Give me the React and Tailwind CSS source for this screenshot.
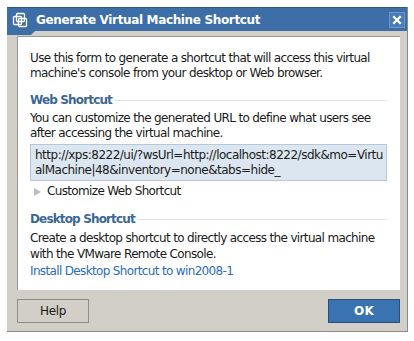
import React from 'react';

const FONT = { fontFamily: '"DejaVu Sans", "Liberation Sans", sans-serif' };

function VmIcon() {
  return (
    <svg width="16" height="16" viewBox="0 0 16 16" fill="none" stroke="#fff" strokeWidth="1.3">
      <rect x="1.5" y="4.5" width="8" height="8" rx="1" />
      <rect x="4.5" y="1.5" width="8" height="8" rx="1" />
      <rect x="6.5" y="6.5" width="8" height="8" rx="1" />
    </svg>
  );
}

function Section({ title, className }) {
  return (
    <div className={`flex items-center gap-[3px] ${className}`}>
      <span className="text-[12px] font-bold text-[#3a6796] leading-[15px] tracking-[-0.85px]">{title}</span>
      <span className="flex-1 h-px bg-[#e1e1e1]" />
    </div>
  );
}

export default function App() {
  return (
    <div className="w-[414px] h-[341px] bg-white overflow-hidden" style={FONT}>
      <div className="ml-[7px] mt-[7px] w-[401px] h-[325px] flex flex-col border-r border-b border-[#8a8a8a]">
        {/* title bar */}
        <div className="relative h-[24px] shrink-0 bg-[#3d6ea8] border-t border-[#2f5a8c] flex items-center pl-[5px] pr-[2px]">
          <VmIcon />
          <span className="ml-[8px] text-white font-bold text-[12px] tracking-[-0.35px]">Generate Virtual Machine Shortcut</span>
          <span className="ml-auto w-[16px] h-[16px] bg-[#4a7cb6] border border-[#6b97c8] flex items-center justify-center">
            <svg width="10" height="10" viewBox="0 0 10 10" stroke="#fff" strokeWidth="2.2" strokeLinecap="square">
              <path d="M2 2 L8 8 M8 2 L2 8" />
            </svg>
          </span>
          <svg className="absolute left-0 top-[23px]" width="28" height="4" viewBox="0 0 28 4">
            <path d="M0 0 H28 L24 4 H0 Z" fill="#3d6ea8" />
          </svg>
        </div>
        {/* body */}
        <div className="flex-1 bg-[#d2cfc9] pl-[10px] pr-[7px] pt-[5px] flex flex-col">
          <div className="h-[254px] shrink-0 bg-white border-t border-l border-[#9a9893] pl-[12px] pr-[13px] pt-[14px] text-[12px] leading-[15px] tracking-[-0.65px] text-[#1a1a1a]">
            <p>Use this form to generate a shortcut that will access this virtual machine's console from your desktop or Web browser.</p>
            <Section title="Web Shortcut" className="mt-[12px]" />
            <p className="mt-[3px]">You can customize the generated URL to define what users see after accessing the virtual machine.</p>
            <div className="mt-[3px] bg-[#dce6f0] border border-[#b6c7d8] pl-[4px] pr-[2px] pt-[3px] pb-[2px] break-all tracking-[-0.5px]">
              http://xps:8222/ui/?wsUrl=http://localhost:8222/sdk&amp;mo=VirtualMachine|48&amp;inventory=none&amp;tabs=hide_
            </div>
            <div className="mt-[3px] flex items-center pl-[4px]">
              <svg width="7" height="8" viewBox="0 0 7 8"><path d="M0 0 L7 4 L0 8 Z" fill="#bdbdbd" /></svg>
              <span className="ml-[6px]">Customize Web Shortcut</span>
            </div>
            <Section title="Desktop Shortcut" className="mt-[13px]" />
            <p className="mt-[3px] leading-[16px]">Create a desktop shortcut to directly access the virtual machine with the VMware Remote Console.</p>
            <p className="mt-[2px] text-[#2a6cbf]">Install Desktop Shortcut to win2008-1</p>
          </div>
          <div className="flex justify-between mt-[9px]">
            <button className="w-[72px] h-[24px] bg-[#d2cfc9] border border-[#8f8c87] text-[12px] tracking-[-0.3px] text-[#1a1a1a]">Help</button>
            <button className="w-[72px] h-[24px] bg-[#3b73b1] border border-[#264f7e] text-[12px] font-bold text-white tracking-[0.3px]">OK</button>
          </div>
        </div>
      </div>
    </div>
  );
}
